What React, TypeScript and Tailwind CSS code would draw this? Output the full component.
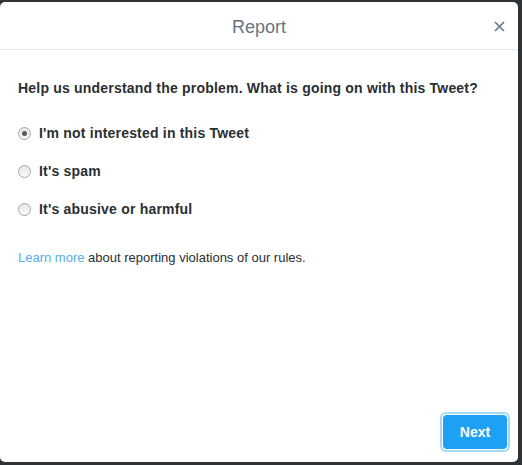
import React, { useState } from 'react';

const options = [
  "I'm not interested in this Tweet",
  "It's spam",
  "It's abusive or harmful",
];

const Radio = ({ checked }: { checked: boolean }) => (
  <span className="flex h-[13px] w-[13px] shrink-0 items-center justify-center rounded-full border border-[#a6a6a6] bg-gradient-to-b from-[#e6e6e6] to-[#fbfbfb]">
    {checked && <span className="h-[5px] w-[5px] rounded-full bg-[#5a5a5a]" />}
  </span>
);

export default function App() {
  const [selected, setSelected] = useState(0);

  return (
    <div className="h-[465px] w-[522px] bg-[#2f3336] pt-[2px] pr-[4px] pb-[3px] font-['Liberation_Sans',Arial,sans-serif]">
      <div className="flex h-full flex-col rounded-[5px] bg-white">
        <header className="relative flex h-[48px] items-center justify-center border-b border-[#e6ecf0] pt-[3px]">
          <h1 className="text-[18px] text-[#66757f]">Report</h1>
          <button className="absolute right-[9px] top-[14px] flex h-[20px] w-[20px] items-center justify-center text-[#66757f]">
            <svg width="11" height="11" viewBox="0 0 11 11" fill="none" stroke="currentColor" strokeWidth="1.6">
              <path d="M1 1L10 10M10 1L1 10" />
            </svg>
          </button>
        </header>

        <div className="flex flex-1 flex-col px-[18px] pt-[28px]">
          <p className="text-[14px] font-bold tracking-[0.2px] text-[#292f33]">
            Help us understand the problem. What is going on with this Tweet?
          </p>

          <div className="mt-[25px] flex flex-col gap-[20px]">
            {options.map((label, i) => (
              <label
                key={label}
                className="flex cursor-pointer items-center gap-[8px]"
                onClick={() => setSelected(i)}
              >
                <Radio checked={selected === i} />
                <span className="text-[14px] font-bold leading-[18px] tracking-[0.2px] text-[#292f33]">{label}</span>
              </label>
            ))}
          </div>

          <p className="mt-[30px] text-[13px] text-[#292f33]">
            <a className="text-[#55acee]">Learn more</a> about reporting violations of our rules.
          </p>
        </div>

        <div className="flex justify-end pb-[10px] pr-[8px]">
          <button className="rounded-[6px] border-2 border-[#a4d9f9] p-px">
            <span className="flex h-[34px] w-[64px] items-center justify-center rounded-[4px] bg-[#1da1f2] text-[14px] font-bold text-white">
              Next
            </span>
          </button>
        </div>
      </div>
    </div>
  );
}
